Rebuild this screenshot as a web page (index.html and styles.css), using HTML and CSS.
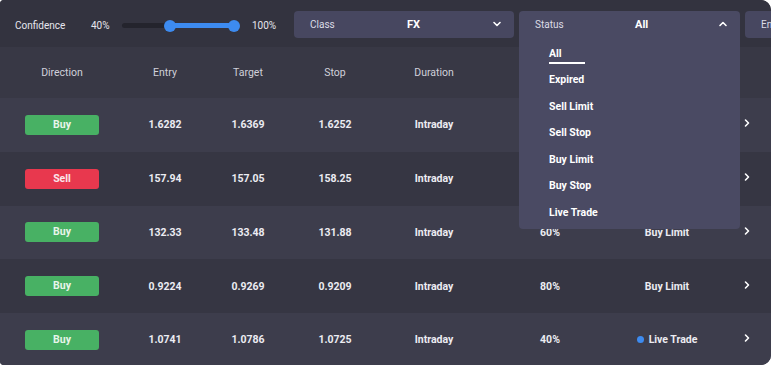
FILE: index.html
```html
<!DOCTYPE html>
<html lang="en">
<head>
    <meta charset="UTF-8">
    <meta name="viewport" content="width=device-width, initial-scale=1.0">
    <title>Signals</title>
    <link rel="stylesheet" href="styles.css">
</head>
<body>
    <div class="panel">
        <div class="filters">
            <div class="range">
                <span class="range-label">Confidence</span>
                <span class="range-min">40%</span>
                <div class="track">
                    <div class="track-fill"></div>
                    <span class="knob knob-left"></span>
                    <span class="knob knob-right"></span>
                </div>
                <span class="range-max">100%</span>
            </div>
            <div class="select">
                <span class="select-label">Class</span>
                <span class="select-value">FX</span>
                <svg class="caret" width="10" height="10" viewBox="0 0 10 10"><path d="M2 3.5l3 3 3-3" fill="none" stroke="#fff" stroke-width="1.6" stroke-linecap="round" stroke-linejoin="round"/></svg>
            </div>
            <div class="select select-open">
                <span class="select-label">Status</span>
                <span class="select-value">All</span>
                <svg class="caret" width="10" height="10" viewBox="0 0 10 10"><path d="M2 6.5l3-3 3 3" fill="none" stroke="#fff" stroke-width="1.6" stroke-linecap="round" stroke-linejoin="round"/></svg>
                <ul class="menu">
                    <li class="active">All</li>
                    <li>Expired</li>
                    <li>Sell Limit</li>
                    <li>Sell Stop</li>
                    <li>Buy Limit</li>
                    <li>Buy Stop</li>
                    <li>Live Trade</li>
                </ul>
            </div>
            <div class="select">
                <span class="select-label">Entry</span>
            </div>
        </div>

        <div class="grid head">
            <div>Direction</div>
            <div>Entry</div>
            <div>Target</div>
            <div>Stop</div>
            <div>Duration</div>
            <div>Confidence</div>
            <div>Status</div>
            <div></div>
        </div>
        <div id="rows"></div>
    </div>

    <script>
        const trades = [
            { dir: "Buy", entry: "1.6282", target: "1.6369", stop: "1.6252", conf: "20%", status: "Expired" },
            { dir: "Sell", entry: "157.94", target: "157.05", stop: "158.25", conf: "60%", status: "Sell Limit" },
            { dir: "Buy", entry: "132.33", target: "133.48", stop: "131.88", conf: "60%", status: "Buy Limit" },
            { dir: "Buy", entry: "0.9224", target: "0.9269", stop: "0.9209", conf: "80%", status: "Buy Limit" },
            { dir: "Buy", entry: "1.0741", target: "1.0786", stop: "1.0725", conf: "40%", status: "Live Trade" }
        ];

        const rows = document.getElementById("rows");
        trades.forEach(t => {
            const row = document.createElement("div");
            row.className = "grid row";
            const live = t.status === "Live Trade" ? '<span class="dot"></span>' : "";
            row.innerHTML = `
                <div><span class="tag ${t.dir.toLowerCase()}">${t.dir}</span></div>
                <div>${t.entry}</div>
                <div>${t.target}</div>
                <div>${t.stop}</div>
                <div>Intraday</div>
                <div>${t.conf}</div>
                <div class="status">${live}${t.status}</div>
                <div><svg width="10" height="10" viewBox="0 0 10 10"><path d="M3.5 2l3 3-3 3" fill="none" stroke="#fff" stroke-width="1.6" stroke-linecap="round" stroke-linejoin="round"/></svg></div>
            `;
            rows.appendChild(row);
        });
    </script>
</body>
</html>
```

FILE: styles.css
```css
* { box-sizing: border-box; }
body { margin: 0; background: #fff; font-family: Roboto, "Liberation Sans", sans-serif; }

.panel { width: 771px; height: 365px; background: #363643; border-radius: 4px 10px 10px 4px; overflow: hidden; color: #ececf2; }

.filters { height: 47px; display: flex; align-items: center; padding: 1px 0 0 15px; background: #33333f; }
.range { display: flex; align-items: center; font-size: 10px; color: #e6e6ee; width: 279px; flex-shrink: 0; margin-top: 3px; }
.range-label { width: 76px; }
.range-min { width: 31px; }
.track { position: relative; width: 112px; height: 5px; border-radius: 3px; background: #24242d; margin-right: 18px; }
.track-fill { position: absolute; left: 48px; right: 0; top: 0; bottom: 0; background: #3d8bf0; border-radius: 3px; }
.knob { position: absolute; top: -3.5px; width: 12px; height: 12px; border-radius: 50%; background: #3d8bf0; }
.knob-left { left: 42px; }
.knob-right { right: -6px; }

.select { position: relative; flex-shrink: 0; width: 220px; height: 27px; margin-right: 5px; background: #474760; border-radius: 4px; display: flex; align-items: center; padding: 0 0 0 16px; font-size: 10px; }
.select-label { width: 97px; color: #dcdce6; }
.select-value { font-weight: 700; font-size: 11px; color: #fff; flex: 1; }
.caret { margin-right: 12px; }
.select-open { width: 221px; border-radius: 4px 4px 0 0; background: #4a4a63; }
.select-open .select-label { width: 100px; }

.menu { position: absolute; left: 0; right: 0; top: 27px; margin: 0; padding: 3px 0 3px 30px; list-style: none; background: #4a4a63; border-radius: 0 0 4px 4px; z-index: 2; }
.menu li { height: 26.5px; line-height: 26.5px; font-size: 10.5px; font-weight: 700; color: #fff; }
.menu li.active { position: relative; }
.menu li.active::after { content: ""; position: absolute; left: 0; top: 21px; width: 36px; height: 2px; background: #fff; }

.grid { display: grid; grid-template-columns: 124px 82px 84px 90px 108px 124px 110px 49px; align-items: center; justify-items: center; }
.head { height: 51px; background: #383845; font-size: 10.5px; color: #d0d0da; }
.row { height: 53.75px; font-size: 10.5px; font-weight: 700; color: #ececf2; }
.row:nth-child(odd) { background: #3d3d4c; }
.row:nth-child(even) { background: #363643; }

.tag { display: block; width: 74px; height: 20px; line-height: 20px; text-align: center; border-radius: 3px; color: #e8f5ea; }
.tag.buy { background: #48b164; }
.tag.sell { background: #e8384e; color: #fbe6ea; }

.status { display: flex; align-items: center; }
.dot { width: 7px; height: 7px; border-radius: 50%; background: #3d8bf0; margin-right: 5px; }
```
